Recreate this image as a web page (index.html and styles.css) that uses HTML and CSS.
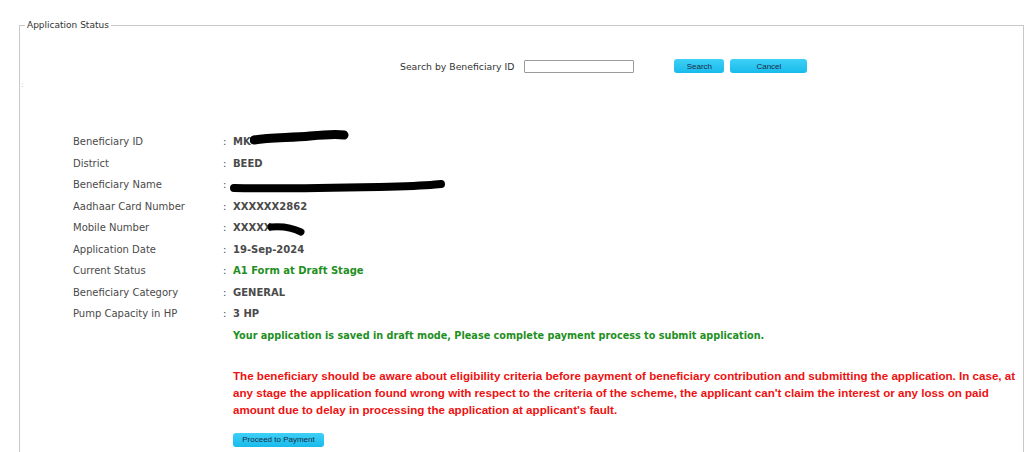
FILE: index.html
```html
<!DOCTYPE html>
<html lang="en">
<head>
  <meta charset="UTF-8" />
  <title>Application Status</title>
  <link rel="stylesheet" href="styles.css">
</head>
<body>
  <fieldset class="status-box">
    <legend>Application Status</legend>

    <div class="search-bar">
      <label for="benId">Search by Beneficiary ID</label>
      <input id="benId" type="text" />
      <button class="btn btn-search">Search</button>
      <button class="btn btn-cancel">Cancel</button>
    </div>

    <div class="stray">:</div>

    <div class="details">
      <div class="lbl">Beneficiary ID</div>
      <div class="sep">:</div>
      <div class="val">MK<svg class="redact redact-id" width="100" height="18" viewBox="0 0 100 18"><path d="M4 11 C20 8 40 9 60 7 S88 5 94 6" fill="none" stroke="#000" stroke-width="9" stroke-linecap="round"/></svg></div>

      <div class="lbl">District</div>
      <div class="sep">:</div>
      <div class="val">BEED</div>

      <div class="lbl">Beneficiary Name</div>
      <div class="sep">:</div>
      <div class="val"><svg class="redact redact-name" width="218" height="16" viewBox="0 0 218 16"><path d="M5 10 C50 11 100 10 150 9 S200 7 212 6" fill="none" stroke="#000" stroke-width="8" stroke-linecap="round"/></svg></div>

      <div class="lbl">Aadhaar Card Number</div>
      <div class="sep">:</div>
      <div class="val">XXXXXX2862</div>

      <div class="lbl">Mobile Number</div>
      <div class="sep">:</div>
      <div class="val">XXXXX<svg class="redact redact-mob" width="40" height="16" viewBox="0 0 40 16"><path d="M4 6 C14 5 24 6 34 11" fill="none" stroke="#000" stroke-width="7" stroke-linecap="round"/></svg></div>

      <div class="lbl">Application Date</div>
      <div class="sep">:</div>
      <div class="val">19-Sep-2024</div>

      <div class="lbl">Current Status</div>
      <div class="sep">:</div>
      <div class="val val-green">A1 Form at Draft Stage</div>

      <div class="lbl">Beneficiary Category</div>
      <div class="sep">:</div>
      <div class="val">GENERAL</div>

      <div class="lbl">Pump Capacity in HP</div>
      <div class="sep">:</div>
      <div class="val">3 HP</div>
    </div>

    <p class="msg-draft">Your application is saved in draft mode, Please complete payment process to submit application.</p>

    <p class="msg-warn">The beneficiary should be aware about eligibility criteria before payment of beneficiary contribution and submitting the application. In case, at any stage the application found wrong with respect to the criteria of the scheme, the applicant can't claim the interest or any loss on paid amount due to delay in processing the application at applicant's fault.</p>

    <button class="btn btn-pay">Proceed to Payment</button>
  </fieldset>
</body>
</html>
```

FILE: styles.css
```css
body {
  margin: 0;
  padding: 18px 4px 0 19px;
  background: #fff;
  font-family: "DejaVu Sans", Verdana, sans-serif;
  font-size: 10px;
  color: #444;
}

.status-box {
  margin: 0;
  padding: 0 0 40px 0;
  border: 1px solid #c8c8c8;
  min-height: 500px;
}

.status-box legend {
  margin-left: 5px;
  padding: 0 2px;
  font-size: 9px;
  line-height: 14px;
  color: #333;
}

.search-bar {
  display: flex;
  align-items: center;
  margin: 26px 0 0 380px;
  height: 16px;
}

.search-bar label {
  font-size: 9.3px;
  color: #333;
}

.search-bar input {
  margin-left: 10px;
  width: 106px;
  height: 9px;
  padding: 1px;
  border: 1px solid #9a9a9a;
  border-radius: 1px;
}

.btn {
  height: 14px;
  padding: 0;
  border: none;
  border-radius: 3px;
  background: linear-gradient(#3fd0f6, #17bbec);
  font-family: "Liberation Sans", Arial, sans-serif;
  font-size: 8px;
  color: #1b2b44;
  cursor: pointer;
}

.btn-search {
  width: 50px;
  margin-left: 40px;
}

.btn-cancel {
  width: 77px;
  margin-left: 6px;
}

.stray {
  margin: 6px 0 0 1px;
  font-size: 7px;
  line-height: 10px;
  color: #aaa;
}

.details {
  display: grid;
  grid-template-columns: 150px 10px auto;
  grid-auto-rows: 21.5px;
  align-items: center;
  margin: 41px 0 0 53px;
}

.lbl,
.sep {
  color: #4a4a4a;
}

.val {
  font-weight: bold;
  color: #4a4a4a;
  display: flex;
  align-items: center;
}

.val-green {
  color: #1f8f1f;
}

.redact {
  display: block;
}

.redact-id {
  margin-left: -1px;
  margin-top: -7px;
}

.redact-name {
  margin-left: -4px;
  margin-top: 2px;
}

.redact-mob {
  margin-left: -5px;
  margin-top: 2px;
}

.msg-draft {
  margin: 5px 0 0 213px;
  font-size: 9.7px;
  font-weight: bold;
  color: #1f8f1f;
}

.msg-warn {
  margin: 26px 0 0 213px;
  width: 790px;
  font-family: "Liberation Sans", Arial, sans-serif;
  font-size: 11.6px;
  font-weight: bold;
  line-height: 17px;
  color: #ee1111;
}

.btn-pay {
  display: block;
  width: 91px;
  margin: 15px 0 0 213px;
}
```
